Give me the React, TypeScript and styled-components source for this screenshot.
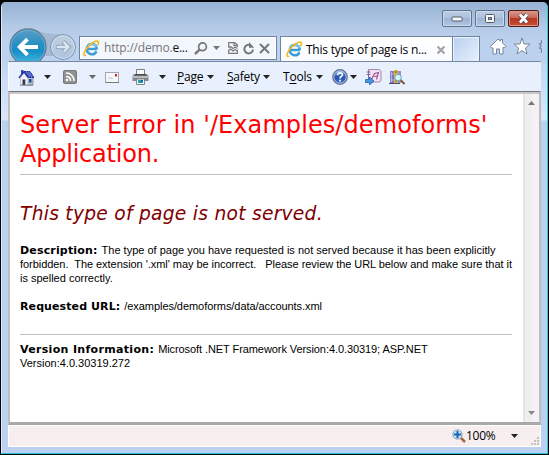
import React from 'react';
import styled, { createGlobalStyle } from 'styled-components';

const Page = createGlobalStyle`
  html, body { margin: 0; padding: 0; overflow: hidden; background: #000; }
  * { box-sizing: border-box; }
  svg { display: block; flex: none; }
`;
const ui = `'Open Sans', 'Noto Sans', sans-serif`;

const Frame = styled.div`
  width: 549px; height: 455px; padding: 2px 2px 0 1px;
  background: #05060a; border-radius: 6px 6px 0 0; overflow: hidden;
`;
const Glass = styled.div`
  height: 452px; display: flex; flex-direction: column; padding: 0 6px 6px;
  border-radius: 5px 5px 0 0; overflow: hidden;
  border-left: 1px solid #dfeafa;
  border-bottom: 1px solid #1fc4dc;
  box-shadow: 1px 0 0 #2cc6e2;
  background: linear-gradient(#99b3d4 0, #a9c2e2 28px, #b9cfea 50px, #c9dbf3 75px, #dae7f8 118px, #bbd1ef 119px);
`;
const Header = styled.div`
  height: 59px; margin: 0 -6px; padding: 0 6px; flex: none;
  background: linear-gradient(#97b1d3 0, #9fb9d9 8px, #b3cae6 24px, #bbd1ee 40px, #bbd1ee);
  display: flex; flex-direction: column;
`;
const TitleRow = styled.div`
  height: 24px; margin-top: 8px; padding-right: 2px; display: flex; justify-content: flex-end; gap: 3px; flex: none;
`;
const Caption = styled.div<{ $close?: boolean }>`
  width: ${p => (p.$close ? 31 : 30)}px; height: 17px; border-radius: 2px; flex: none;
  border: 1px solid ${p => (p.$close ? '#551916' : '#61728f')};
  box-shadow: inset 0 0 0 1px ${p => (p.$close ? '#dc9686' : '#cbdaec')};
  background: ${p => (p.$close
    ? 'linear-gradient(#d69a8c, #c9685a 45%, #b93622 50%, #c84e34)'
    : 'linear-gradient(#bccde3, #aec2de 45%, #9eb4d3 50%, #aec5e2)')};
  display: flex; align-items: center; justify-content: center;
`;
const NavRow = styled.div`display: flex; height: 27px; flex: none;`;
const BackForward = styled.div`width: 71px; height: 27px; flex: none; svg { margin-top: -7px; }`;
const Address = styled.div`
  width: 198px; height: 24px; margin-top: 2px; border: 1px solid #71839e; background: #f2f6fd;
  box-shadow: inset 0 0 0 1px #fff;
  display: flex; align-items: center; padding-left: 3px; flex: none;
`;
const Label = styled.span<{ $w?: number; $ls?: number; $ml?: number; $c?: string }>`
  font: 12px/16px ${ui}; white-space: pre; flex: none; color: ${p => p.$c || '#000'};
  width: ${p => (p.$w ? p.$w + 'px' : 'auto')}; margin-left: ${p => p.$ml || 0}px;
  letter-spacing: ${p => p.$ls || 0}px;
  u { text-underline-offset: 2px; text-decoration-thickness: 1px; text-decoration-skip-ink: none; }
`;
const Host = styled.span`color: #111;`;
const Tab = styled.div`
  width: 172px; height: 27px; margin: 2px 0 0 3px; border: 1px solid #71839e; border-bottom: 0; border-right: 0;
  background: linear-gradient(#fff, #f9fbff); display: flex; align-items: center; padding: 0 0 1px 5px; flex: none;
`;
const NewTab = styled.div`
  width: 28px; height: 27px; margin-top: 2px; border: 1px solid #71839e; border-bottom: 0; flex: none;
  box-shadow: inset 0 0 0 1px #e9f2fd; background: linear-gradient(135deg, #b9d0ef, #e9f2ff);
`;
const Commands = styled.div`
  height: 30px; flex: none; border-top: 1px solid #7888a3; background: #e8effd;
  border-left: 1px solid #f4f8ff; display: flex; align-items: center; padding-top: 1px;
`;
const Viewport = styled.div`
  height: 334px; flex: none; display: flex; border: 2px solid #bdbdbd;
  border-bottom: 3px solid #a9a9a9; border-top: 1px solid #6f757c;
  background: #fff; box-shadow: inset 0 2px 0 #cbc7c5;
`;
const Doc = styled.div`width: 513px; padding: 19px 0 0 10px; flex: none;`;
const Title = styled.h1`
  font: 24px/29px 'DejaVu Sans', sans-serif; color: #f00; margin: 0; white-space: nowrap;
`;
const Sub = styled.h2`
  font: italic 18.67px/24px 'DejaVu Sans', sans-serif; color: #800000; margin: 27px 0 17px; white-space: nowrap;
`;
const Gap = styled.div<{ $w: number }>`width: ${p => p.$w}px; flex: none;`;
const Rule = styled.div<{ $mt: number }>`width: 492px; height: 1px; background: #c0c0c0; margin-top: ${p => p.$mt}px;`;
const Para = styled.p<{ $mt?: number }>`
  margin: ${p => p.$mt || 0}px 0 0; font: 11px/14px 'Liberation Sans', Arial, sans-serif; color: #000;
`;
const Line = styled.span`height: 14px; white-space: pre; display: flex; align-items: baseline;`;
const Run = styled.span<{ $ls?: number }>`letter-spacing: ${p => p.$ls || 0}px; white-space: pre;`;
const Strong = styled.b<{ $ls?: number }>`
  font: bold 11px/14px 'DejaVu Sans', sans-serif; letter-spacing: ${p => p.$ls || 0}px; margin-right: 4px;
`;
const Scroll = styled.div`
  width: 16px; background: linear-gradient(90deg, #e6e5e6 0, #e6e5e6 2px, #efeeef 2px, #efeeef 8px, #f6f1f6 9px);
  display: flex; flex-direction: column; align-items: center; justify-content: space-between; padding: 7px 0 7px;
  margin-top: 2px;
`;
const Status = styled.div`
  height: 22px; flex: none; background: #f6eeef; border: 1px solid #fff; display: flex; align-items: center;
`;
const Grip = styled.svg`align-self: flex-end; margin-bottom: 1px;`;

const Arrow = ({ c = '#222' }: { c?: string }) => (
  <svg width="7" height="4" viewBox="0 0 7 4"><path d="M0 0h7L3.5 4z" fill={c} /></svg>
);
const IELogo = () => (
  <svg width="17" height="17" viewBox="0 0 17 17" fill="none">
    <path d="M14.2 9.1H5.1M13.8 9.1C13.6 5.8 11.7 4 9 4a5.1 5.1 0 1 0 4.5 7.4" stroke="#3b9cd6" strokeWidth="2.5" />
    <path d="M4.6 7.4C5 5.4 6.8 4 9 4c2.2 0 3.8 1.1 4.5 3" stroke="#7accee" strokeWidth="1.4" />
    <path d="M3 15.3C.2 16.4.4 13 3.4 8.8 7.1 3.7 12.6.2 14.8 1.3c1.1.6 1 2-.1 3.9" stroke="#f3b91a" strokeWidth="1.6" />
  </svg>
);
const House = () => (
  <svg width="17" height="17" viewBox="0 0 17 17">
    <path d="M8 8l4-5 3 5v8H8z" fill="#b9c1d0" stroke="#717990" strokeWidth=".7" />
    <path d="M3 1h2.5v4H3z" fill="#3447b8" />
    <path d="M6 2.5h6L16 8.5h-5z" fill="#5568c8" stroke="#1e319e" strokeWidth="1" strokeDasharray="2 .7" />
    <path d="M2.5 8.8L6 4l4 5v7H2.5z" fill="#eef1f7" stroke="#9aa2b2" strokeWidth=".6" />
    <path d="M.8 9L6 2.8l4.5 6" fill="none" stroke="#1e319e" strokeWidth="1.2" />
    <path d="M4.5 10.5h2.8V16H4.5z" fill="#303b58" /><path d="M11 10h2.5v3.5H11z" fill="#1e4e94" />
    <path d="M2 16.2h13" stroke="#80858e" />
  </svg>
);
const Feed = () => (
  <svg width="14" height="14" viewBox="0 0 14 14" fill="none">
    <rect x=".5" y=".5" width="13" height="13" rx="1.3" fill="#929292" stroke="#777" />
    <path d="M3 3c4.7 0 8 3.4 8 8M3 6.4c2.8 0 4.6 1.9 4.6 4.6" stroke="#fff" strokeWidth="1.5" /><circle cx="4" cy="10" r="1.3" fill="#fff" />
  </svg>
);
const Mail = () => (
  <svg width="14" height="11" viewBox="0 0 14 11">
    <rect x=".5" y=".5" width="13" height="10" fill="#f5f6fa" stroke="#a3a6b3" /><path d="M1 10.5h13" stroke="#777" />
    <rect x="10" y="2" width="2" height="2.5" fill="#d02320" /><path d="M3 6h5" stroke="#c2c5cc" />
  </svg>
);
const Printer = () => (
  <svg width="17" height="16" viewBox="0 0 17 16">
    <path d="M4.5 6V.5h8V6" fill="#f8f8fa" stroke="#7b7e83" />
    <path d="M2 5h13l1.500 2v5H.5V7z" fill="#85888c" /><path d="M1 7h15v2H1z" fill="#b8babc" /><path d="M3 5h11v1.5H3z" fill="#484b50" />
    <path d="M4.5 10h8v5.5h-8z" fill="#f8ffff" stroke="#818486" /><path d="M6 11h5v3H6z" fill="#299ba6" /><path d="M9 11h2v1.5H9z" fill="#1550b0" />
  </svg>
);
const Help = () => (
  <svg width="16" height="16" viewBox="0 0 16 16">
    <defs><linearGradient id="help" x2="0" y2="1"><stop stopColor="#8eb4ef" /><stop offset=".5" stopColor="#274fae" /><stop offset="1" stopColor="#2f70d0" /></linearGradient></defs>
    <circle cx="8" cy="8" r="7.2" fill="url(#help)" stroke="#6a7792" strokeWidth="1.4" /><circle cx="8" cy="8" r="6.1" fill="none" stroke="#d8e4fa" strokeWidth=".7" />
    <path d="M5.6 6.1c.1-3 5.2-2.8 4.8-.1C10.2 7.5 8 7.5 8 9.6" fill="none" stroke="#fff" strokeWidth="1.7" /><path d="M7.1 10.8h1.8v1.8H7.1z" fill="#fff" />
  </svg>
);
const LinkedNote = () => (
  <svg width="17" height="16" viewBox="0 0 17 16">
    <path d="M3.5 .5h11l1.5 1.5v9.5l-2 1.5H3.5z" fill="#f3e4f4" stroke="#a384b2" /><path d="M3.5 1v9M1.5 3h4M1.5 5.5h4" stroke="#8a64a4" fill="none" />
    <path d="M6.5 10.5l3-6 4-1-2 7M9 7.5l3-.5" stroke="#9a4f93" strokeWidth="1.1" fill="none" />
    <path d="M.5 10.5h4V8l4.500 4-4.500 4v-2.500h-4z" fill="#4499df" stroke="#2265ae" strokeWidth=".8" />
  </svg>
);
const Research = () => (
  <svg width="16" height="16" viewBox="0 0 16 16">
    <path d="M1 2h4v12H1z" fill="#8176b8" /><path d="M2.5 3v10M1 5h4M1 11h4" stroke="#c9c2e8" strokeWidth=".8" />
    <path d="M5 1h4v13H5z" fill="#ddb140" /><path d="M9 2h3v12H9z" fill="#9a8fc8" /><path d="M6 3h2M6 12h2" stroke="#745d27" />
    <path d="M11.5 11l4 4" stroke="#825c39" strokeWidth="2" /><circle cx="9" cy="8.5" r="3.3" fill="#d2f4f8" stroke="#69a4bc" />
    <path d="M0 14.5h11" stroke="#4d487c" />
  </svg>
);
const Buttons = () => (
  <svg width="71" height="34" viewBox="0 0 71 34">
    <defs>
      <linearGradient id="back" x2="0" y2="1"><stop stopColor="#5c9fc5" /><stop offset=".45" stopColor="#268fc3" /><stop offset=".62" stopColor="#168fc8" /><stop offset="1" stopColor="#4ebbe1" /></linearGradient>
      <linearGradient id="fwd" x2="0" y2="1"><stop stopColor="#c1d0e2" /><stop offset="1" stopColor="#adc4de" /></linearGradient>
    </defs>
    <path d="M24 2c8 2 14 6 31 5L58 29H26z" fill="#a6b9d2" />
    <circle cx="20" cy="20" r="18" fill="url(#back)" stroke="#657d94" strokeWidth="1.3" />
    <circle cx="20" cy="20" r="16.8" fill="none" stroke="#6cb6d7" strokeWidth=".8" />
    <path d="M30 20H13M19.5 12.2L11.7 20l7.8 7.8" fill="none" stroke="#fff" strokeWidth="3.8" />
    <circle cx="55" cy="20" r="12.5" fill="url(#fwd)" stroke="#8093ac" /><circle cx="55" cy="20" r="11.3" fill="none" stroke="#cfddeb" />
    <path d="M48 20h11M55 14.5l5.500 5.500-5.500 5.500" fill="none" stroke="#8ea1ba" strokeWidth="4.3" /><path d="M48.7 20h11M55.4 14.9l5.1 5.1-5.1 5.1" fill="none" stroke="#dce6f1" strokeWidth="2.3" />
  </svg>
);
const Search = () => (
  <svg width="14" height="13" viewBox="0 0 14 13" fill="none" stroke="#777">
    <circle cx="8.5" cy="4.8" r="3.9" strokeWidth="1.7" /><path d="M5.6 7.7L1 12" strokeWidth="2.4" />
  </svg>
);
const Compat = () => (
  <svg width="10" height="12" viewBox="0 0 10 12" fill="none" stroke="#777">
    <path d="M.7 5V.7h6l2.600 2.200V5M.7 8v3.300h8.600V8M6 1v2.500h3" strokeWidth="1.2" />
    <path d="M.5 6l2-1.500L5 6.500 7 5l2.500 1.500M.5 8.500L2.500 7 5 9l2-1.500L9.500 9" strokeWidth="1.1" />
  </svg>
);
const Refresh = () => (
  <svg width="12" height="13" viewBox="0 0 12 13" fill="none">
    <path d="M7.500 3.200A4.300 4.300 0 1 0 10 7.500" stroke="#777" strokeWidth="2" /><path d="M6 0v5.800h5.200z" fill="#777" />
  </svg>
);

export default function App() {
  return (
    <>
      <Page />
      <Frame>
        <Glass>
          <Header>
            <TitleRow>
              <Caption><svg width="12" height="6" viewBox="0 0 12 6"><rect x="1" y="1" width="10" height="4" rx="1" fill="#f7f7f7" stroke="#525b6a" /></svg></Caption>
              <Caption><svg width="12" height="10" viewBox="0 0 12 10"><rect x="1.5" y=".5" width="9" height="8" rx="1" fill="#f7f7f7" stroke="#525b6a" /><rect x="4.5" y="3.5" width="3" height="2" fill="#94abcb" stroke="#525b6a" /></svg></Caption>
              <Caption $close><svg width="13" height="11" viewBox="0 0 13 11"><path d="M3 1.5l7 8m0-8l-7 8" stroke="#5c4a55" strokeWidth="4.5" /><path d="M3 1.5l7 8m0-8l-7 8" stroke="#fff" strokeWidth="2.7" /></svg></Caption>
            </TitleRow>
            <NavRow>
              <BackForward><Buttons /></BackForward>
              <Address>
                <IELogo />
                <Label $w={90} $ml={4} $c="#777" $ls={-0.2}>http://demo.<Host>e...</Host></Label>
                <Search />
                <Gap $w={5} /><Arrow c="#777" />
                <Gap $w={8} /><Compat />
                <Gap $w={5} /><Refresh />
                <Gap $w={4} /><svg width="11" height="11" viewBox="0 0 11 11"><path d="M1 1l9 9m0-9l-9 9" stroke="#777" strokeWidth="2" /></svg>
              </Address>
              <Tab>
                <IELogo />
                <Label $w={127} $ml={3} $ls={-0.24}>This type of page is n...</Label>
                <Gap $w={4} />
                <svg width="8" height="8" viewBox="0 0 8 8"><path d="M.5.5l7 7m0-7l-7 7" stroke="#a3a3a3" strokeWidth="2.2" /></svg>
              </Tab>
              <NewTab />
              <Gap $w={9} />
              <svg width="53" height="22" viewBox="0 0 53 22">
                <path d="M1.5 12.5L9 5l2.5 2V5.5h2V9l3.5 3.5-1.5 1H14v6.5h-3.5v-5h-3v5H4v-6H2.500z" fill="#fff" stroke="#77869d" />
                <path d="M33 4l2 6h6l-4.5 4 1.5 6-5-3.5-5 3.5 1.5-6-4.5-4h6z" fill="#fff" stroke="#77869d" />
                <path d="M52.5 6v3l-2 1 1.5 2-1.5 2 2 1v4" fill="none" stroke="#77869d" strokeWidth="1.2" />
              </svg>
            </NavRow>
          </Header>
          <Commands>
            <Gap $w={9} /><House /><Gap $w={9} /><Arrow /><Gap $w={12} /><Feed /><Gap $w={12} /><Arrow c="#666" />
            <Gap $w={9} /><Mail /><Gap $w={13} /><Printer /><Gap $w={10} /><Arrow />
            <Label $w={30} $ml={11} $ls={-0.2}><u>P</u>age</Label><Arrow />
            <Label $w={36} $ml={13} $ls={-0.25}><u>S</u>afety</Label><Arrow />
            <Label $w={33} $ml={13} $ls={-0.2}>T<u>o</u>ols</Label><Arrow />
            <Gap $w={9} /><Help /><Gap $w={2} /><Arrow /><Gap $w={8} /><LinkedNote /><Gap $w={7} /><Research />
          </Commands>
          <Viewport>
            <Doc>
              <Title>
                <div><Run $ls={0.08}>Server Error in '/Examples/demoforms'</Run></div>
                <div><Run $ls={-0.22}>Application.</Run></div>
              </Title>
              <Rule $mt={5} />
              <Sub><Run $ls={0.26}>This type of page is not served.</Run></Sub>
              <Para>
                <Line><Strong $ls={0.17}>Description:</Strong><Run>The type of page you have requested is not served because it has been explicitly</Run></Line>
                <Line><Run $ls={-0.05}>forbidden.  The extension '.xml' may be incorrect.   Please review the URL below and make sure that it</Run></Line>
                <Line><Run>is spelled correctly.</Run></Line>
              </Para>
              <Para $mt={14}><Line><Strong $ls={0.1}>Requested URL:</Strong><Run $ls={-0.06}>/examples/demoforms/data/accounts.xml</Run></Line></Para>
              <Rule $mt={21} />
              <Para $mt={7}>
                <Line><Strong $ls={0.32}>Version Information:</Strong><Run $ls={-0.08}>Microsoft .NET Framework Version:4.0.30319; ASP.NET</Run></Line>
                <Line><Run>Version:4.0.30319.272</Run></Line>
              </Para>
            </Doc>
            <Scroll>
              <svg width="7" height="4" viewBox="0 0 7 4"><path d="M0 4h7L3.5 0z" fill="#777" /></svg>
              <Arrow c="#888" />
            </Scroll>
          </Viewport>
          <Status>
            <Gap $w={443} />
            <svg width="14" height="14" viewBox="0 0 14 14"><path d="M9 9l4 4" stroke="#a26945" strokeWidth="2.5" /><circle cx="5.5" cy="5.5" r="4.6" fill="#c9e6fb" stroke="#8297aa" /><path d="M5.5 2v7M2 5.5h7" stroke="#1466bb" strokeWidth="2" /></svg>
            <Label $w={45} $ls={-0.25}>100%</Label><Arrow />
            <Gap $w={13} />
            <Grip width="8" height="8" viewBox="0 0 8 8"><path d="M6 0h2v2H6zM3 3h2v2H3zM6 3h2v2H6zM0 6h2v2H0zM3 6h2v2H3zM6 6h2v2H6z" fill="#c6bfc1" /></Grip>
          </Status>
        </Glass>
      </Frame>
    </>
  );
}
